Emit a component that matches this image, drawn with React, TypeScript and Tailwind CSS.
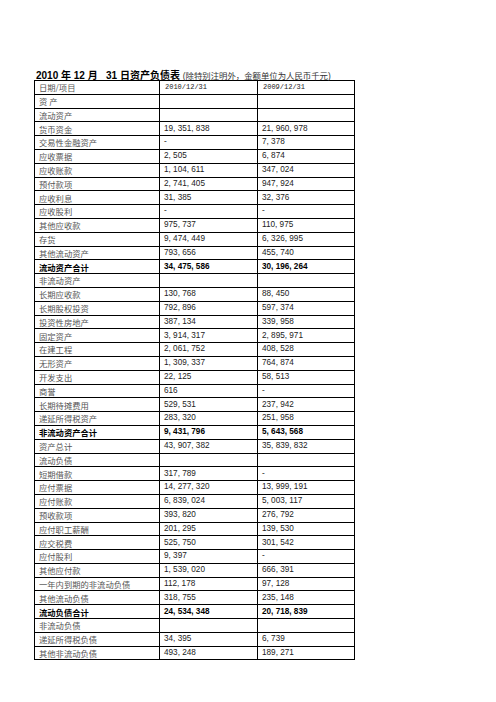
import React from 'react';

type Row = [string, string, string, boolean?];

// 资产负债表 rows: label, 2010, 2009, bold
const rows: Row[] = [
  ['资 产', '', ''],
  ['流动资产', '', ''],
  ['货币资金', '19, 351, 838', '21, 960, 978'],
  ['交易性金融资产', '-', '7, 378'],
  ['应收票据', '2, 505', '6, 874'],
  ['应收账款', '1, 104, 611', '347, 024'],
  ['预付款项', '2, 741, 405', '947, 924'],
  ['应收利息', '31, 385', '32, 376'],
  ['应收股利', '-', '-'],
  ['其他应收款', '975, 737', '110, 975'],
  ['存货', '9, 474, 449', '6, 326, 995'],
  ['其他流动资产', '793, 656', '455, 740'],
  ['流动资产合计', '34, 475, 586', '30, 196, 264', true],
  ['非流动资产', '', ''],
  ['长期应收款', '130, 768', '88, 450'],
  ['长期股权投资', '792, 896', '597, 374'],
  ['投资性房地产', '387, 134', '339, 958'],
  ['固定资产', '3, 914, 317', '2, 895, 971'],
  ['在建工程', '2, 061, 752', '408, 528'],
  ['无形资产', '1, 309, 337', '764, 874'],
  ['开发支出', '22, 125', '58, 513'],
  ['商誉', '616', '-'],
  ['长期待摊费用', '529, 531', '237, 942'],
  ['递延所得税资产', '283, 320', '251, 958'],
  ['非流动资产合计', '9, 431, 796', '5, 643, 568', true],
  ['资产总计', '43, 907, 382', '35, 839, 832'],
  ['流动负债', '', ''],
  ['短期借款', '317, 789', '-'],
  ['应付票据', '14, 277, 320', '13, 999, 191'],
  ['应付账款', '6, 839, 024', '5, 003, 117'],
  ['预收款项', '393, 820', '276, 792'],
  ['应付职工薪酬', '201, 295', '139, 530'],
  ['应交税费', '525, 750', '301, 542'],
  ['应付股利', '9, 397', '-'],
  ['其他应付款', '1, 539, 020', '666, 391'],
  ['一年内到期的非流动负债', '112, 178', '97, 128'],
  ['其他流动负债', '318, 755', '235, 148'],
  ['流动负债合计', '24, 534, 348', '20, 718, 839', true],
  ['非流动负债', '', ''],
  ['递延所得税负债', '34, 395', '6, 739'],
  ['其他非流动负债', '493, 248', '189, 271'],
];

function Cell({ w, last, children, className }: { w: string; last?: boolean; children?: React.ReactNode; className: string }) {
  return (
    <div className={`${w} ${last ? '' : 'border-r border-black'} flex items-center pl-[4px] whitespace-pre leading-none ${className}`}>
      {children}
    </div>
  );
}

export default function App() {
  return (
    <div className="w-[496px] h-[702px] bg-white overflow-hidden">
      <div className="pt-[68px] pl-[36px] h-[80px] whitespace-pre leading-[12px] text-black font-['Liberation_Sans','Noto_Sans_CJK_SC',sans-serif]">
        <span className="text-[10px] font-bold">{'2010 年 12 月   31 日资产负债表 '}</span>
        <span className="text-[8.4px] text-[#333]">(除特别注明外，金额单位为人民币千元)</span>
      </div>
      <div className="ml-[34px] w-[321px] border border-black">
        <div className="flex h-[13.8px] border-b border-black">
          <Cell w="w-[125px]" className="text-[8.3px] text-[#555] font-['Noto_Sans_CJK_SC',sans-serif]">日期/项目</Cell>
          <Cell w="w-[98px]" className="pl-[5px] text-[7px] text-[#222] font-['Liberation_Mono',monospace]">2010/12/31</Cell>
          <Cell w="flex-1" last className="pl-[5px] text-[7px] text-[#222] font-['Liberation_Mono',monospace]">2009/12/31</Cell>
        </div>
        {rows.map(([label, a, b, bold], i) => (
          <div key={i} className={i === rows.length - 1 ? 'flex h-[12.8px]' : 'flex h-[13.8px] border-b border-black'}>
            <Cell
              w="w-[125px]"
              className={
                bold
                  ? "text-[8.3px] font-bold text-black font-['Noto_Sans_CJK_SC',sans-serif]"
                  : "text-[8.3px] text-[#555] font-['Noto_Sans_CJK_SC',sans-serif]"
              }
            >
              {label}
            </Cell>
            <Cell
              w="w-[98px]"
              className={
                bold
                  ? "text-[8.2px] font-bold text-black font-['Liberation_Sans',sans-serif]"
                  : "text-[8.2px] text-[#222] font-['Liberation_Sans',sans-serif]"
              }
            >
              {a}
            </Cell>
            <Cell
              w="flex-1"
              last
              className={
                bold
                  ? "text-[8.2px] font-bold text-black font-['Liberation_Sans',sans-serif]"
                  : "text-[8.2px] text-[#222] font-['Liberation_Sans',sans-serif]"
              }
            >
              {b}
            </Cell>
          </div>
        ))}
      </div>
    </div>
  );
}
